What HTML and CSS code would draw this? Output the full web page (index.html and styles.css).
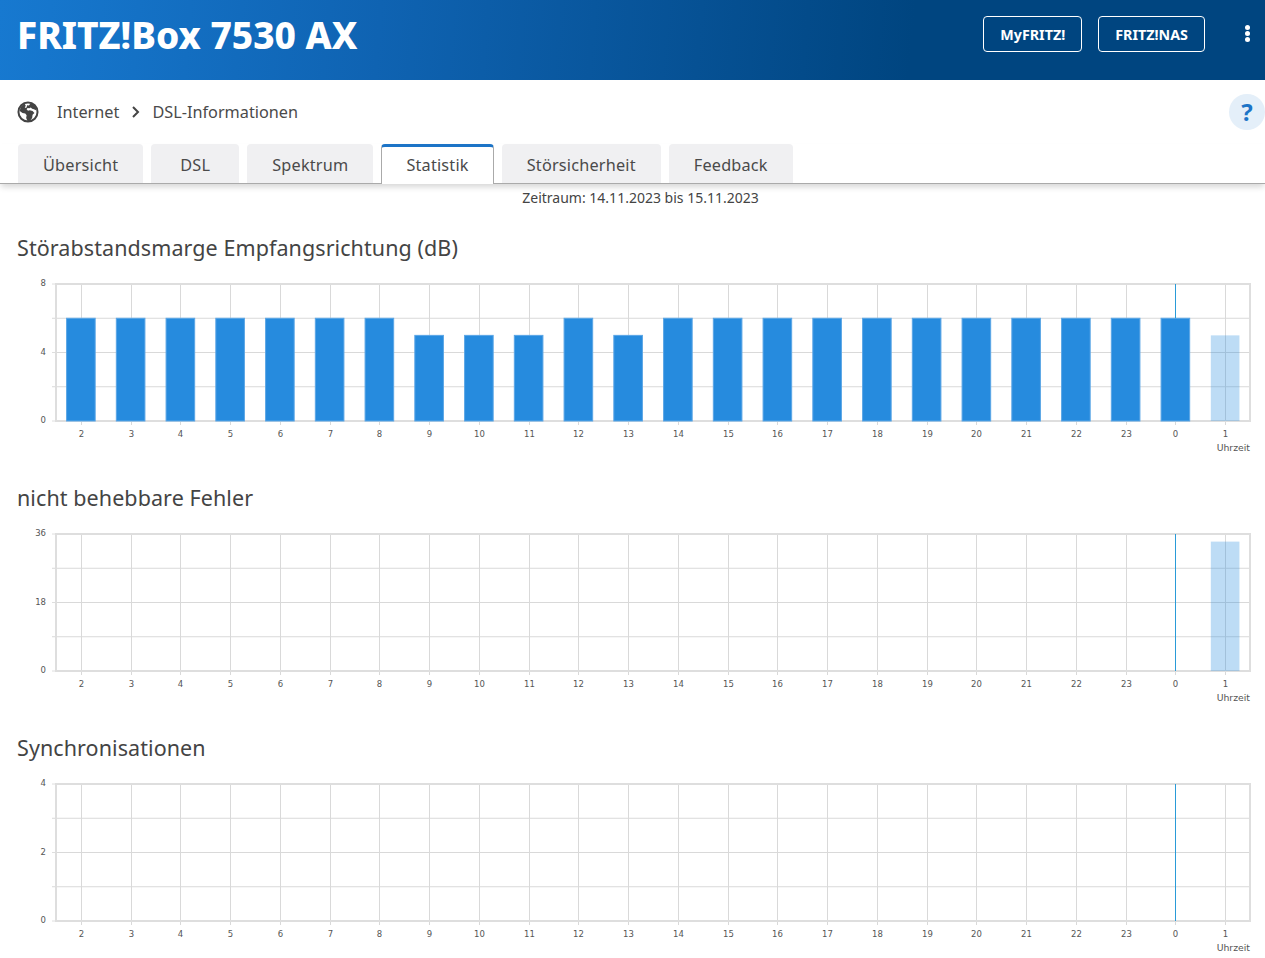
FILE: index.html
```html
<!DOCTYPE html>
<html lang="de">
<head>
<meta charset="utf-8">
<title>FRITZ!Box 7530 AX</title>
<link rel="stylesheet" href="styles.css">
</head>
<body>
<header class="topbar">
  <h1 class="brand">FRITZ!Box 7530 AX</h1>
  <div class="top-actions">
    <a class="top-btn">MyFRITZ!</a>
    <a class="top-btn">FRITZ!NAS</a>
    <span class="dots"><i></i><i></i><i></i></span>
  </div>
</header>
<nav class="crumbs">
  <svg class="globe" viewBox="0 0 24 24" width="22" height="22">
    <circle cx="12" cy="12" r="10.4" fill="#fff" stroke="#444" stroke-width="2.2"/>
    <path fill="#444" d="M8 2.500 4 6.500 3 11l3 2 3 .5 1.500 2-.5 3 1.500 3.500 2 .5 3-4 .5-3.500 2-2-2-2-3-1-2 .5-1.500-1.500 1-1.500 2 .5 1.500-1 1.500 1.500 2 .5 2 1 .5-2-1.500-4L15 2.500 13 5 11 4.500 10.500 7 8.500 7.500 9.500 5z"/>
  </svg>
  <span class="crumb">Internet</span>
  <svg class="chev" viewBox="0 0 10 14" width="10" height="14"><path d="M2 2l5 5-5 5" fill="none" stroke="#444" stroke-width="2"/></svg>
  <span class="crumb">DSL-Informationen</span>
  <span class="help">?</span>
</nav>
<div class="tabs">
  <a class="tab">Übersicht</a>
  <a class="tab">DSL</a>
  <a class="tab">Spektrum</a>
  <a class="tab active">Statistik</a>
  <a class="tab">Störsicherheit</a>
  <a class="tab">Feedback</a>
</div>
<p class="period">Zeitraum: 14.11.2023 bis 15.11.2023</p>
<main id="charts">
  <section class="chart" data-max="8" data-values="6,6,6,6,6,6,6,5,5,5,6,5,6,6,6,6,6,6,6,6,6,6,6,5">
    <h2>Störabstandsmarge Empfangsrichtung (dB)</h2>
  </section>
  <section class="chart" data-max="36" data-values="0,0,0,0,0,0,0,0,0,0,0,0,0,0,0,0,0,0,0,0,0,0,0,34">
    <h2>nicht behebbare Fehler</h2>
  </section>
  <section class="chart" data-max="4" data-values="0,0,0,0,0,0,0,0,0,0,0,0,0,0,0,0,0,0,0,0,0,0,0,0">
    <h2>Synchronisationen</h2>
  </section>
</main>
<script src="chart.js"></script>
</body>
</html>
```
FILE: styles.css
```css
* { box-sizing: border-box; }
html, body { margin: 0; padding: 0; }
body {
  background: #fff;
  color: #444;
  font-family: "Noto Sans", "Liberation Sans", sans-serif;
  overflow: hidden;
}
.topbar {
  height: 80px;
  display: flex;
  align-items: center;
  justify-content: space-between;
  padding: 0 0 0 17px;
  background: linear-gradient(95deg, #1779d0 0%, #0f63b2 30%, #004580 72%, #004580 100%);
  color: #fff;
}
.brand {
  margin: 0 0 11px;
  font-size: 37px;
  line-height: 52px;
  font-weight: 800;
}
.top-actions { display: flex; align-items: center; margin-top: -12px; }
.top-btn {
  height: 36px;
  display: flex;
  align-items: center;
  justify-content: center;
  padding: 0 16px;
  margin-right: 16px;
  border: 1px solid #fff;
  border-radius: 4px;
  font-size: 14.300px;
  font-weight: 700;
}
.dots {
  display: flex;
  flex-direction: column;
  gap: 1px;
  width: 44px;
  margin-top: -2px;
  padding-left: 24px;
}
.dots i { width: 5px; height: 5px; border-radius: 50%; background: #fff; }
.crumbs {
  height: 64px;
  display: flex;
  align-items: center;
  padding: 0 0 1px 17px;
}
.globe { margin-right: 18px; }
.crumb { font-size: 16.250px; color: #4a4a4a; }
.chev { margin: 0 11px 0 12px; }
.help {
  width: 36px;
  height: 36px;
  margin-left: auto;
  border-radius: 50%;
  background: #e4eff9;
  color: #1c74c7;
  font-size: 24px;
  font-weight: 700;
  display: flex;
  align-items: center;
  justify-content: center;
}
.tabs {
  height: 40px;
  display: flex;
  gap: 8px;
  padding-left: 18px;
  border-bottom: 1px solid #aaa;
  box-shadow: 0 4px 6px -1px rgba(0, 0, 0, .16);
}
.tab {
  height: 39px;
  min-width: 88px;
  padding: 3px 25px 0;
  display: flex;
  align-items: center;
  justify-content: center;
  background: #f0f0f2;
  border-radius: 4px 4px 0 0;
  font-size: 16.250px;
  letter-spacing: .2px;
  color: #4a4a4a;
}
.tab.active {
  height: 40px;
  padding: 0 24px 1px;
  background: #fff;
  border: 1px solid #aaa;
  border-top: 3px solid #1c74c7;
  border-bottom: 0;
}
.period {
  margin: 5px 0 0;
  height: 18px;
  line-height: 18px;
  text-align: center;
  font-size: 14px;
  padding-left: 16px;
}
.chart { height: 250px; }
.period + main { margin-top: -1px; }
.chart h2 {
  margin: 0;
  padding: 27px 0 0 17px;
  height: 62px;
  font-size: 21.500px;
  letter-spacing: .08px;
  line-height: 30px;
  font-weight: 400;
  color: #444;
}
.plot { display: block; }
.plot .g { stroke: #d9d9d9; stroke-width: 1; }
.plot .frame { stroke: #dedede; stroke-width: 2; fill: none; }
.plot .tick { stroke: #dedede; stroke-width: 1; }
.plot .bar { fill: #268bde; stroke: #5ba6e6; stroke-width: 1; }
.plot .bar-light { fill: rgba(38, 139, 222, .3); }
.plot .now-mark { fill: #2a9bd8; }
.plot text { font-family: "DejaVu Sans", sans-serif; font-size: 8.500px; fill: #555; }
.plot .axis-title { font-size: 9.300px; }
```
FILE: chart.js
```js
var NS = "http://www.w3.org/2000/svg";
var HOURS = [2,3,4,5,6,7,8,9,10,11,12,13,14,15,16,17,18,19,20,21,22,23,0,1];
var L = 56, R = 1250, T = 16, B = 153;

function el(parent, name, attrs, text) {
  var n = document.createElementNS(NS, name);
  for (var k in attrs) n.setAttribute(k, attrs[k]);
  if (text !== undefined) n.textContent = text;
  parent.appendChild(n);
  return n;
}

document.querySelectorAll(".chart").forEach(function (sec) {
  var max = +sec.dataset.max;
  var values = sec.dataset.values.split(",").map(Number);
  var svg = el(sec, "svg", { "class": "plot", width: 1265, height: 188, viewBox: "0 0 1265 188" });
  var step = (R - L) / 24;
  var h = B - T;

  for (var i = 1; i < 4; i++) {
    var gy = T + h * i / 4;
    el(svg, "line", { "class": "g", x1: L - 4, x2: R, y1: gy, y2: gy });
  }
  HOURS.forEach(function (hour, i) {
    var x = Math.round(L + step * (i + .5)) + .5;
    el(svg, "line", { "class": "g", x1: x, x2: x, y1: T, y2: B + 4 });
    el(svg, "text", { x: x, y: B + 16, "text-anchor": "middle" }, hour);
  });
  el(svg, "rect", { "class": "frame", x: L, y: T, width: R - L, height: h });
  [0, 1, 2].forEach(function (i) {
    var yv = T + h * i / 2;
    el(svg, "line", { "class": "tick", x1: L - 4, x2: L, y1: yv, y2: yv });
    el(svg, "text", { x: 46, y: yv + 2, "text-anchor": "end" }, max - max * i / 2);
  });
  values.forEach(function (v, i) {
    if (!v) return;
    var cx = L + step * (i + .5);
    var top = B - h * v / max;
    el(svg, "rect", { "class": i === 23 ? "bar-light" : "bar", x: cx - 14.300, y: top, width: 28.600, height: B - top });
  });
  var cur = Math.round(L + step * 22.5);
  var curTop = B - h * values[22] / max;
  el(svg, "rect", { "class": "now-mark", fill: "#2a9bd8", x: cur, y: T, width: 1, height: curTop - T });
  el(svg, "text", { "class": "axis-title", x: R, y: B + 30, "text-anchor": "end" }, "Uhrzeit");
});
```
